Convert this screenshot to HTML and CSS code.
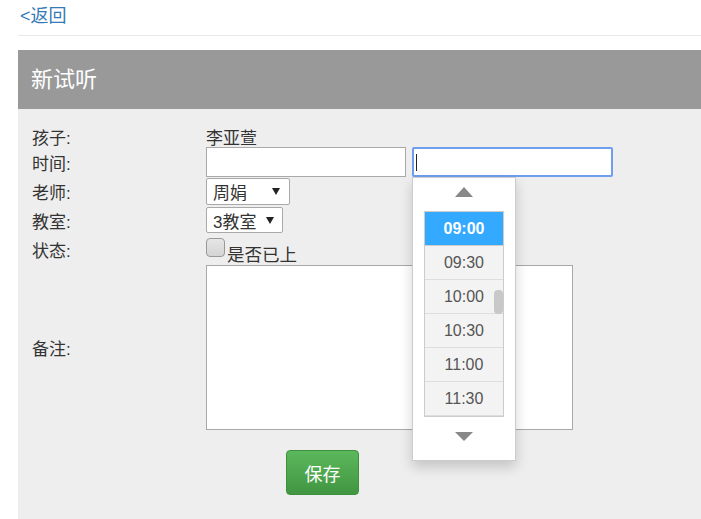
FILE: index.html
```html
<!DOCTYPE html>
<html lang="zh">
<head>
<meta charset="utf-8">
<title>新试听</title>
<link rel="stylesheet" href="styles.css">
</head>
<body>
<div class="topbar"><a class="back" href="#">&lt;返回</a></div>
<div class="panel">
  <div class="panel-head">新试听</div>
  <div class="panel-body">
    <div class="row r1"><span class="label">孩子:</span><span class="value">李亚萱</span></div>
    <div class="row r2"><span class="label">时间:</span>
      <div class="inputs">
        <div class="input"></div>
        <div class="input focus"><span class="caret"></span></div>
      </div>
    </div>
    <div class="row r3"><span class="label">老师:</span><div class="select s-teacher"><span>周娟</span><span class="arrow"></span></div></div>
    <div class="row r4"><span class="label">教室:</span><div class="select s-room"><span>3教室</span><span class="arrow"></span></div></div>
    <div class="row r5"><span class="label">状态:</span><div class="check"><span class="box"></span><span class="check-text">是否已上</span></div></div>
    <div class="row r6"><span class="label">备注:</span><div class="textarea"></div></div>
    <div class="actions"><button class="btn-save">保存</button></div>
  </div>
</div>
<div class="picker">
  <div class="pick-arrow up"></div>
  <div class="pick-list">
    <div class="item active">09:00</div>
    <div class="item">09:30</div>
    <div class="item">10:00</div>
    <div class="item">10:30</div>
    <div class="item">11:00</div>
    <div class="item">11:30</div>
    <div class="thumb"></div>
  </div>
  <div class="pick-arrow down"></div>
</div>
</body>
</html>
```
FILE: styles.css
```css
html, body {
  margin: 0;
  padding: 0;
  background: #fff;
  font-family: "Liberation Sans", "Noto Sans CJK SC", sans-serif;
  color: #333;
  overflow: hidden;
}
.topbar {
  margin-left: 18px;
  height: 36px;
  border-bottom: 1px solid #e8e8e8;
  box-sizing: border-box;
  padding-left: 2px;
  display: flex;
  align-items: center;
}
.back {
  color: #337ab7;
  text-decoration: none;
  font-size: 18px;
  line-height: 20px;
  margin-top: -3px;
}
.panel {
  margin: 14px 0 0 18px;
  background: #eee;
}
.panel-head {
  background: #999;
  color: #fff;
  height: 59px;
  font-size: 22px;
  line-height: 59px;
  padding-left: 13px;
}
.panel-body {
  padding: 16px 0 25px 14px;
  font-size: 17px;
}
.row {
  display: flex;
  align-items: center;
}
.label {
  width: 174px;
  flex: none;
}
.r1 { height: 22px; }
.r2 { height: 30px; }
.r3 { height: 29px; }
.r4 { height: 28px; }
.r5 { height: 31px; }
.r6 { height: 165px; }
.inputs {
  display: flex;
  gap: 6px;
}
.input {
  width: 200px;
  height: 30px;
  box-sizing: border-box;
  background: #fff;
  border: 1px solid #a9a9a9;
}
.input.focus {
  width: 201px;
  border: 2px solid #6d9eef;
  border-radius: 2px;
  padding: 5px 0 0 2px;
}
.caret {
  display: block;
  width: 1px;
  height: 17px;
  background: #222;
}
.select {
  box-sizing: border-box;
  background: #fff;
  border: 1px solid #a9a9a9;
  border-radius: 2px;
  display: flex;
  align-items: center;
  justify-content: space-between;
  padding: 0 9px 0 6px;
}
.s-teacher { width: 84px; height: 27px; }
.s-room { width: 77px; height: 26px; padding-right: 8px; }
.arrow {
  width: 0;
  height: 0;
  border-left: 4px solid transparent;
  border-right: 4px solid transparent;
  border-top: 7px solid #222;
}
.check {
  display: flex;
  align-items: flex-start;
  height: 28px;
  margin-top: 5px;
}
.box {
  width: 19px;
  height: 19px;
  box-sizing: border-box;
  border: 1px solid #999;
  border-radius: 4px;
  background: linear-gradient(#e6e6e6, #d4d4d4);
  margin-right: 2px;
}
.check-text {
  font-size: 17.5px;
  line-height: 20px;
  margin-top: 7px;
}
.textarea {
  width: 367px;
  height: 165px;
  box-sizing: border-box;
  background: #fff;
  border: 1px solid #a9a9a9;
}
.actions {
  padding: 20px 0 0 254px;
}
.btn-save {
  width: 73px;
  height: 45px;
  border: 1px solid #3e8f3e;
  border-radius: 4px;
  background: linear-gradient(#5cb85c, #419641);
  color: #fff;
  font-family: "Liberation Sans", "Noto Sans CJK SC", sans-serif;
  font-size: 18px;
  padding: 0;
}
.picker {
  position: absolute;
  left: 412px;
  top: 177px;
  width: 104px;
  height: 284px;
  box-sizing: border-box;
  background: #fff;
  border: 1px solid #ccc;
  box-shadow: 0 6px 12px rgba(0, 0, 0, 0.175);
  display: flex;
  flex-direction: column;
  align-items: center;
}
.pick-arrow {
  width: 0;
  height: 0;
  border-left: 9px solid transparent;
  border-right: 9px solid transparent;
}
.pick-arrow.up {
  border-bottom: 10px solid #888;
  margin-top: 9px;
}
.pick-arrow.down {
  border-top: 9px solid #888;
  margin-top: 15px;
}
.pick-list {
  position: relative;
  align-self: flex-start;
  margin-top: 14px;
  margin-left: 11px;
  width: 80px;
  box-sizing: border-box;
  border: 1px solid #ccc;
  background: #f3f3f3;
}
.item {
  height: 34px;
  line-height: 33px;
  border-bottom: 1px solid #ddd;
  box-sizing: border-box;
  text-align: center;
  font-size: 16px;
  color: #555;
}
.item:last-of-type {
  height: 35px;
}
.item.active {
  background: #33a9ff;
  color: #fff;
  font-weight: bold;
  border-bottom-color: #ccc;
}
.thumb {
  position: absolute;
  right: 0;
  top: 78px;
  width: 9px;
  height: 24px;
  border-radius: 4px;
  background: #c8c8c8;
}
```
